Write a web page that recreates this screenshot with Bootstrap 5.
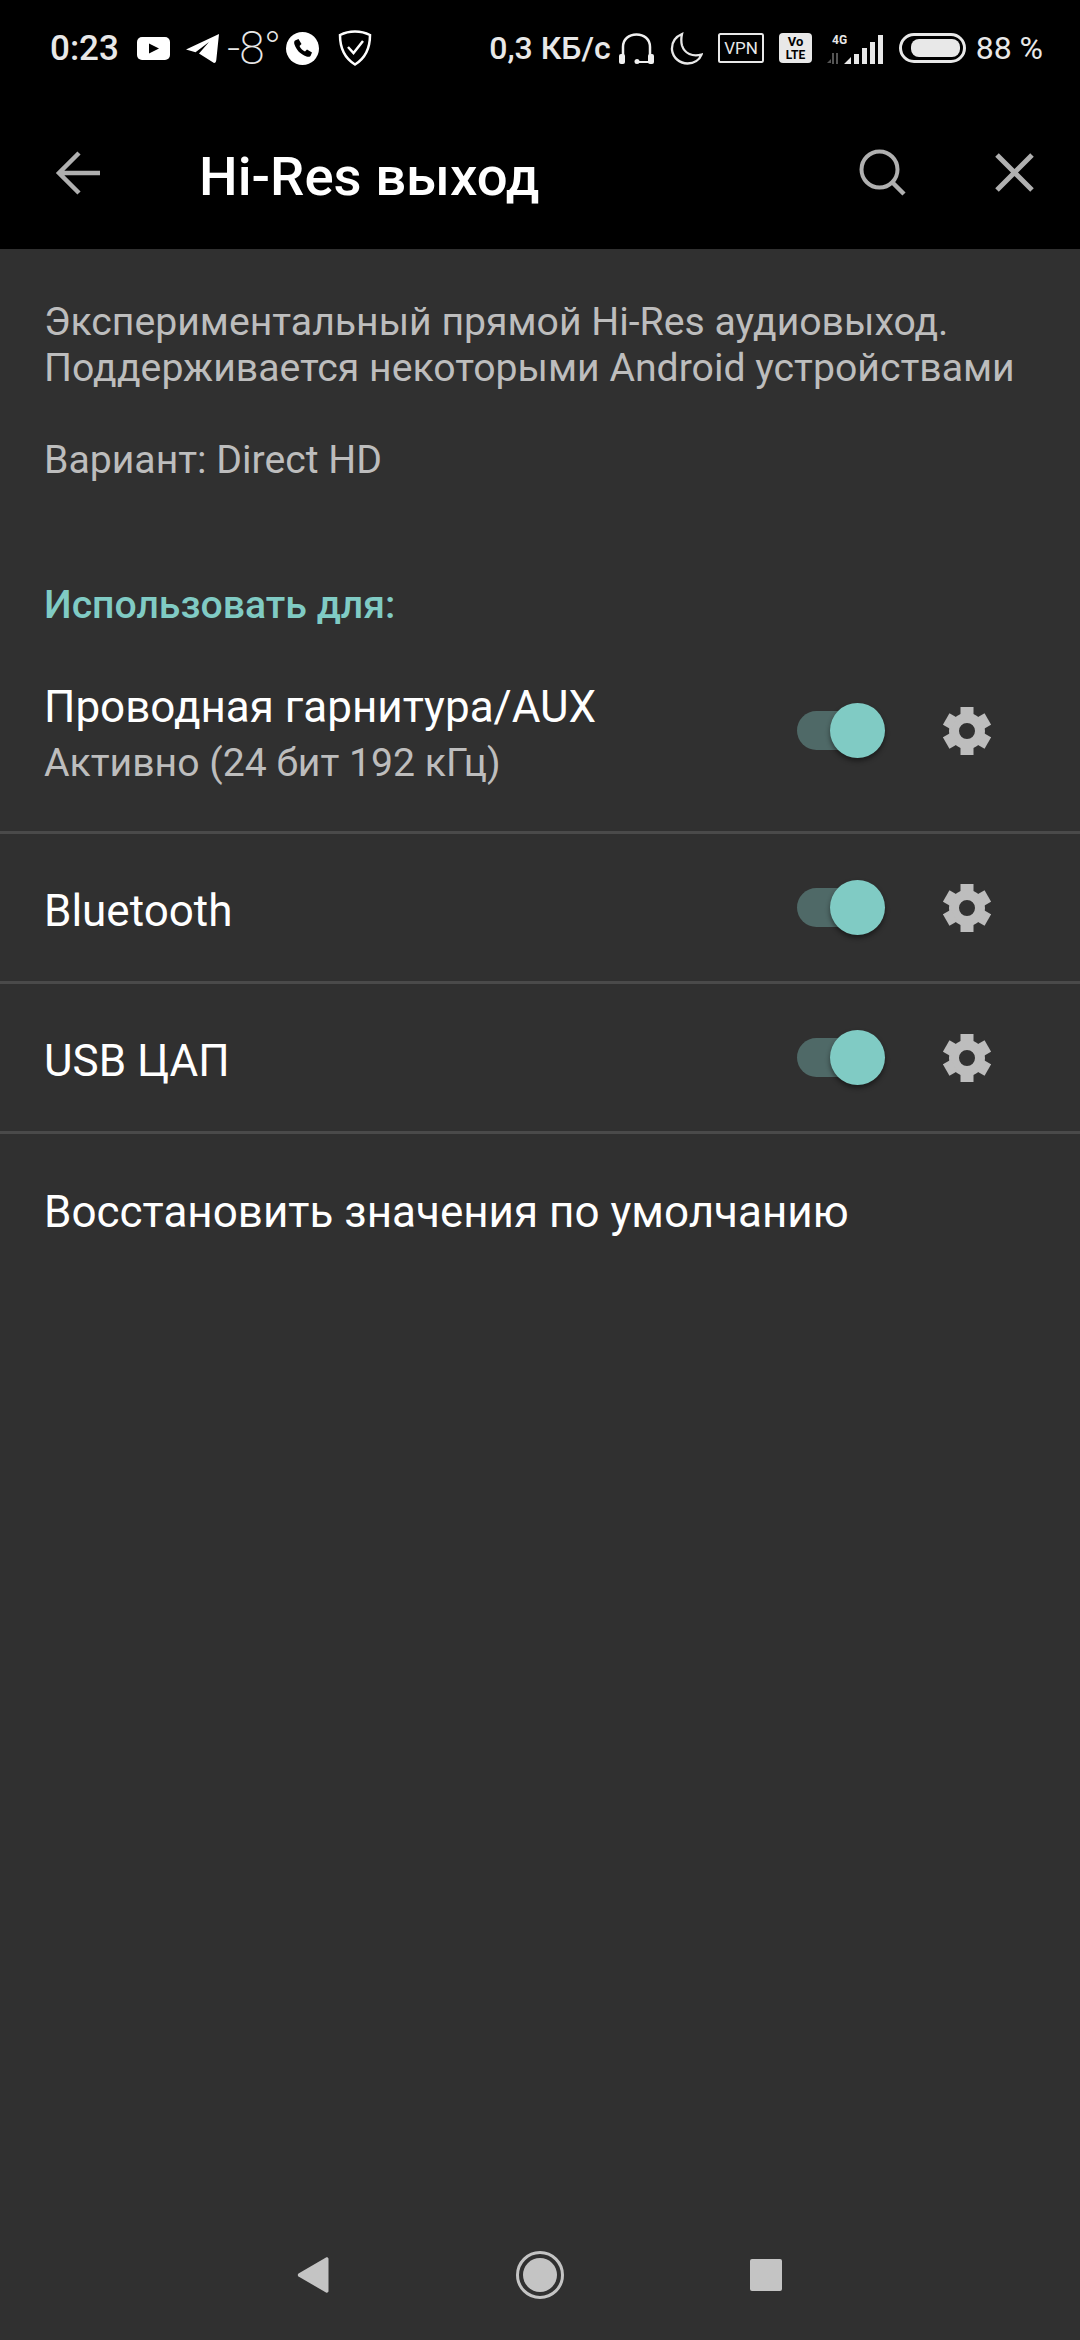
<!DOCTYPE html>
<html lang="ru">
<head>
  <meta charset="UTF-8" />
  <meta name="viewport" content="width=device-width, initial-scale=1.0"/>
  <title>Hi-Res выход</title>
  <link rel="stylesheet" href="https://cdn.jsdelivr.net/npm/bootstrap@5.3.0/dist/css/bootstrap.min.css">
  <style>
    html, body { height: 100%; }
    body { background: #303030; font-family: Roboto, "Noto Sans", sans-serif; color: #fff; }
    .screen { height: 2340px; }

    /* status bar */
    .status-bar { height: 96px; padding: 0 37px 0 50px; color: #e8e8e8; }
    .status-bar svg { flex: none; display: block; }
    .st-time { font-size: 35px; font-weight: 500; line-height: 1; }
    .st-speed { font-size: 32px; font-weight: 500; line-height: 1; }
    .st-temp { font-size: 46px; font-weight: 200; line-height: 1; margin-left: 8px; width: 51px; white-space: nowrap; letter-spacing: -1px; }
    .st-batt { font-size: 32px; font-weight: 400; line-height: 1; margin-left: 10px; }
    .ml-yt { margin-left: 18px; }
    .ml-tg { margin-left: 16px; }
    .ml-ph { margin-left: 8.5px; }
    .ml-sh { margin-left: 18.5px; }
    .ml-hs { margin-left: 8px; }
    .ml-mo { margin-left: 16px; }
    .ml-vp { margin-left: 15px; }
    .ml-vo { margin-left: 15px; }
    .ml-sg { margin-left: 14px; }
    .ml-bt { margin-left: 16px; }

    /* toolbar */
    .tool-bar { height: 153px; background: #000; padding: 0 46px 0 55px; }
    .tool-title { font-size: 54.5px; font-weight: 500; line-height: 1; margin: 7px 0 0 99px; }
    .tool-search { margin-right: 89px; }

    /* settings */
    .intro { padding: 50px 44px 0; color: #bdbdbd; font-size: 39.2px; line-height: 46px; }
    .intro p { margin: 0; }
    .intro .variant { margin-top: 46px; }
    .sect-head { color: #80cbc4; font-size: 39.2px; font-weight: 500; line-height: 46px; padding: 0 44px; margin-top: 99px; }
    .set-list { --bs-list-group-bg: transparent; --bs-list-group-color: #fff; --bs-list-group-border-color: #4a4a4a; --bs-list-group-border-width: 3px; }
    .set-row { padding: 0 45px 0 44px; height: 150px; }
    .set-row.first-row { height: 206px; padding-top: 2px; }
    .set-text { padding-top: 6px; }
    .set-name { font-size: 44px; line-height: 50px; }
    .set-sub { font-size: 39.2px; line-height: 46px; color: #bdbdbd; margin-top: 8px; }
    .sw-track { position: relative; width: 72px; height: 39px; border-radius: 20px; background: #4f6967; margin-right: 74px; }
    .sw-thumb { position: absolute; right: -16px; top: -8px; width: 55px; height: 55px; border-radius: 50%; background: #80cbc4; box-shadow: 0 3px 5px rgba(0,0,0,.45); }
    .gear-ic { margin-right: 44px; }

    /* nav bar */
    .nav-keys { padding: 0 298px 41px 297px; }
    .nav-keys svg { display: block; }
  </style>
</head>
<body>
  <div class="screen d-flex flex-column">
    <header class="bg-black">
      <!-- Status bar -->
      <div class="status-bar d-flex align-items-center">
        <span class="st-time">0:23</span>
        <svg class="ml-yt" width="33" height="23" viewBox="0 0 33 23"><rect width="33" height="23" rx="5" fill="#fff"/><path d="M12 6.500l10 5-10 5z" fill="#000"/></svg>
        <svg class="ml-tg" width="33" height="29" viewBox="0 0 33 29"><path d="M33 0L0 15.500l9.500 2.800L23 8 13 19.500l15 9.500c1.500 0 2-1 2.300-3z" fill="#fff"/></svg>
        <span class="st-temp">-8°</span>
        <svg class="ml-ph" width="33" height="33" viewBox="0 0 33 33"><circle cx="16.500" cy="16.500" r="16.500" fill="#fff"/><path d="M9 8.500l3.500-1.500 3 5-2 2c1 2.500 3 4.500 5.500 5.500l2-2 5 3-1.500 3.500c-1 1-2.500 1-4 .5C14 22 10.500 18 8.500 12.500c-.5-1.500-.5-3 .5-4z" fill="#000"/></svg>
        <svg class="ml-sh" width="34" height="36" viewBox="0 0 34 36"><path d="M17 1.500c5 0 10.500 1.200 15 3.500 0 12-3.500 22.500-15 29.500C5.500 27.500 2 17 2 5c4.500-2.300 10-3.500 15-3.500z" fill="none" stroke="#fff" stroke-width="2.500"/><path d="M10 17l5.500 6L25 11" fill="none" stroke="#fff" stroke-width="2.500"/></svg>
        <span class="st-speed ms-auto">0,3 КБ/с</span>
        <svg class="ml-hs" width="35" height="31" viewBox="0 0 35 31"><path d="M4 23V14C4 6 10 1.500 17.500 1.500S31 6 31 14v9" fill="none" stroke="#f0f0f0" stroke-width="2.500"/><rect x="0" y="21" width="6" height="10" rx="2" fill="#f0f0f0"/><rect x="29" y="21" width="6" height="10" rx="2" fill="#f0f0f0"/><circle cx="18" cy="28.500" r="2.500" fill="#f0f0f0"/><path d="M18 29h12" stroke="#f0f0f0" stroke-width="2"/></svg>
        <svg class="ml-mo" width="33" height="33" viewBox="0 0 33 33"><path d="M12 2C5 5 1.500 11 2 18c1 8 8 13.500 15.500 13.500 6.500 0 12-3.500 14-9-9 2.500-17-1-19.500-9-1-4-.8-8 0-11.500z" fill="none" stroke="#e8e8e8" stroke-width="2.300"/></svg>
        <svg class="ml-vp" width="46" height="30" viewBox="0 0 46 30"><rect x="1" y="1" width="44" height="28" rx="1.500" fill="none" stroke="#e8e8e8" stroke-width="2"/><text x="23" y="21" text-anchor="middle" font-family="Roboto, sans-serif" font-size="17" fill="#e8e8e8">VPN</text></svg>
        <svg class="ml-vo" width="33" height="30" viewBox="0 0 33 30"><rect width="33" height="30" rx="4" fill="#e8e8e8"/><text x="16.500" y="13" text-anchor="middle" font-family="Roboto, sans-serif" font-size="13" font-weight="700" fill="#000">Vo</text><text x="16.500" y="26" text-anchor="middle" font-family="Roboto, sans-serif" font-size="12" font-weight="700" fill="#000">LTE</text></svg>
        <svg class="ml-sg" width="57" height="31" viewBox="0 0 57 31"><text x="6" y="11" font-family="Roboto, sans-serif" font-size="12" font-weight="700" fill="#e8e8e8">4G</text><path d="M1 30l4-4v4zM6 20h2v11H6zM10 20h2v11h-2z" fill="#555"/><path d="M18 31l7-7v7zM28 21h5v10h-5zM36 15h5v16h-5zM44 9h5v22h-5zM52 2h5v29h-5z" fill="#e8e8e8"/></svg>
        <svg class="ml-bt" width="67" height="30" viewBox="0 0 67 30"><rect x="1.500" y="1.500" width="64" height="27" rx="13.500" fill="none" stroke="#e8e8e8" stroke-width="3"/><rect x="12" y="6" width="49" height="18" rx="8" fill="#e8e8e8"/></svg>
        <span class="st-batt">88 %</span>
      </div>
      <!-- Toolbar -->
      <div class="tool-bar d-flex align-items-center">
        <svg width="45" height="44" viewBox="0 0 45 44"><path d="M24 2L4 22l20 20M4 22h41" fill="none" stroke="#b0b0b0" stroke-width="4.500"/></svg>
        <h1 class="tool-title mb-0 flex-grow-1">Hi-Res выход</h1>
        <svg class="tool-search" width="47" height="47" viewBox="0 0 47 47"><circle cx="20.500" cy="20.500" r="18" fill="none" stroke="#b0b0b0" stroke-width="4"/><path d="M33 33l12 12" stroke="#b0b0b0" stroke-width="4.500"/></svg>
        <svg width="39" height="39" viewBox="0 0 39 39"><path d="M2 2l35 35M37 2L2 37" stroke="#b0b0b0" stroke-width="5"/></svg>
      </div>
    </header>

    <main class="flex-grow-1">
      <div class="intro">
        <p>Экспериментальный прямой Hi-Res аудиовыход.<br>Поддерживается некоторыми Android устройствами</p>
        <p class="variant">Вариант: Direct HD</p>
      </div>
      <div class="sect-head">Использовать для:</div>

      <div class="list-group list-group-flush set-list">
        <div class="list-group-item set-row first-row d-flex align-items-center">
          <div class="set-text flex-grow-1">
            <div class="set-name">Проводная гарнитура/AUX</div>
            <div class="set-sub">Активно (24 бит 192 кГц)</div>
          </div>
          <div class="sw-track"><div class="sw-thumb"></div></div>
          <svg class="gear-ic" width="48" height="48" viewBox="0 0 48 48"><use href="#gear"/></svg>
        </div>
        <div class="list-group-item set-row d-flex align-items-center">
          <div class="set-text set-name flex-grow-1">Bluetooth</div>
          <div class="sw-track"><div class="sw-thumb"></div></div>
          <svg class="gear-ic" width="48" height="48" viewBox="0 0 48 48"><use href="#gear"/></svg>
        </div>
        <div class="list-group-item set-row d-flex align-items-center">
          <div class="set-text set-name flex-grow-1">USB ЦАП</div>
          <div class="sw-track"><div class="sw-thumb"></div></div>
          <svg class="gear-ic" width="48" height="48" viewBox="0 0 48 48"><use href="#gear"/></svg>
        </div>
        <div class="list-group-item set-row d-flex align-items-center">
          <div class="set-text set-name">Восстановить значения по умолчанию</div>
        </div>
      </div>
    </main>

    <!-- Nav keys -->
    <div class="nav-keys d-flex justify-content-between align-items-center">
      <svg width="32" height="38" viewBox="0 0 32 38"><path d="M29 1.500c1 -.5 2.500 0 2.500 1.500v32c0 1.500-1.500 2-2.500 1.500L1.500 20.500c-1-.7-1-2.300 0-3z" fill="#c4c4c4"/></svg>
      <svg width="48" height="48" viewBox="0 0 48 48"><circle cx="24" cy="24" r="22.500" fill="none" stroke="#c4c4c4" stroke-width="3"/><circle cx="24" cy="24" r="17" fill="#c4c4c4"/></svg>
      <svg width="32" height="32" viewBox="0 0 32 32"><rect width="32" height="32" rx="2" fill="#c4c4c4"/></svg>
    </div>
  </div>

  <svg width="0" height="0" class="position-absolute">
    <defs>
      <g id="gear">
        <path d="M24 6a18 18 0 1 0 0 36a18 18 0 1 0 0-36zM24 16a8 8 0 1 1 0 16a8 8 0 1 1 0-16z" fill="#bdbdbd" fill-rule="evenodd"/>
        <g fill="#bdbdbd">
          <rect x="17.500" y="0" width="13" height="9"/>
          <rect x="17.500" y="39" width="13" height="9"/>
          <rect x="17.500" y="0" width="13" height="9" transform="rotate(60 24 24)"/>
          <rect x="17.500" y="39" width="13" height="9" transform="rotate(60 24 24)"/>
          <rect x="17.500" y="0" width="13" height="9" transform="rotate(120 24 24)"/>
          <rect x="17.500" y="39" width="13" height="9" transform="rotate(120 24 24)"/>
        </g>
      </g>
    </defs>
  </svg>

  <script src="https://cdn.jsdelivr.net/npm/bootstrap@5.3.0/dist/js/bootstrap.bundle.min.js"></script>
</body>
</html>
